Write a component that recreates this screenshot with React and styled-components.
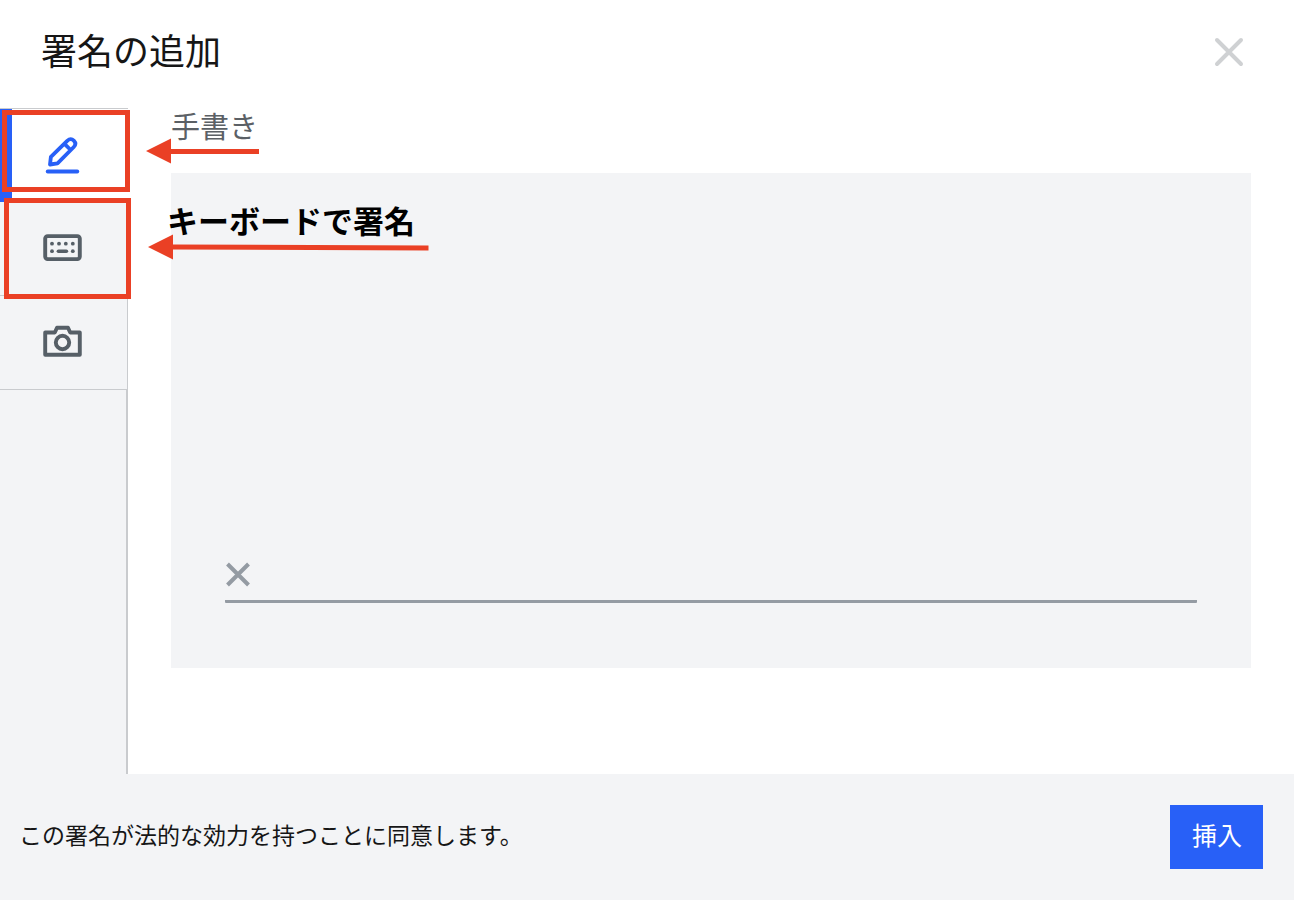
import React from "react";
import styled, { createGlobalStyle } from "styled-components";

const GlobalStyle = createGlobalStyle`
  *, *::before, *::after { box-sizing: border-box; }
  body {
    margin: 0;
    background: #ffffff;
    font-family: "Noto Sans CJK JP", sans-serif;
    color: #161616;
  }
  button { font-family: inherit; cursor: pointer; }
`;

const Dialog = styled.section`
  position: relative;
  display: flex;
  flex-direction: column;
  min-height: 100vh;
`;

const Header = styled.header`
  display: flex;
  align-items: flex-start;
  justify-content: space-between;
  height: 108px;
  padding: 24px 44px 0 41px;
`;

const Title = styled.h1`
  margin: 0;
  font-size: 36px;
  line-height: 50px;
  font-weight: 400;
`;

const CloseButton = styled.button`
  display: flex;
  margin-top: 7px;
  padding: 4px;
  border: 0;
  background: none;
`;

const Body = styled.div`
  display: flex;
  flex: 1;
`;

const Sidebar = styled.nav`
  display: flex;
  flex-direction: column;
  width: 128px;
  flex-shrink: 0;
  background: #f3f4f6;
`;

const SidebarFill = styled.div`
  flex: 1;
  border-right: 2px solid #c9cbce;
`;

const Tabs = styled.div`
  display: flex;
  flex-direction: column;
  border-top: 1px solid #c9cbce;
`;

const Tab = styled.button`
  display: flex;
  align-items: center;
  justify-content: center;
  height: 94px;
  padding: 0 ${(p) => (p.$active ? 14 : 1)}px 0 0;
  border: 0;
  border-left: ${(p) => (p.$active ? "12px solid #2860f7" : "0")};
  border-right: ${(p) => (p.$active ? "0" : "1px solid #c9cbce")};
  border-bottom: 1px solid #c9cbce;
  background: ${(p) => (p.$active ? "#ffffff" : "#f3f4f6")};
  color: ${(p) => (p.$active ? "#2860f7" : "#565f67")};

  & + & { margin-top: -1px; }
  &:last-child { margin-top: 0; }
`;

const Content = styled.main`
  flex: 1;
  padding: 0 43px 40px;
`;

const ModeTitle = styled.h2`
  margin: 0;
  height: 65px;
  font-size: 29px;
  line-height: 34px;
  font-weight: 400;
  color: #5b6065;
`;

const SignaturePad = styled.div`
  display: flex;
  flex-direction: column;
  justify-content: flex-end;
  aspect-ratio: 24 / 11;
  padding: 0 5% 65px;
  background: #f3f4f6;
`;

const SignatureLine = styled.div`
  display: flex;
  height: 41px;
  border-bottom: 3px solid #949ba3;
  border-radius: 1px;
`;

const Footer = styled.footer`
  display: flex;
  align-items: flex-start;
  justify-content: space-between;
  height: 126px;
  padding: 31px 31px 0 19px;
  background: #f3f4f6;
`;

const Consent = styled.p`
  margin: 0;
  font-size: 23px;
  line-height: 58px;
`;

const InsertButton = styled.button`
  height: 64px;
  padding: 0 21px 6px 22px;
  border: 0;
  background: #2860f7;
  color: #ffffff;
  font-size: 25px;
  line-height: 36px;
`;

const Highlight = styled.div`
  position: absolute;
  left: ${(p) => p.$left}px;
  top: ${(p) => p.$top}px;
  width: ${(p) => p.$width}px;
  height: ${(p) => p.$height}px;
  border: 5px solid #ea4025;
  pointer-events: none;
`;

const Arrows = styled.svg`
  position: absolute;
  left: 140px;
  top: 130px;
  pointer-events: none;
`;

const Note = styled.strong`
  position: absolute;
  left: 167px;
  top: 198px;
  font-size: 31px;
  line-height: 44px;
  font-weight: 700;
  color: #000000;
`;

const PenIcon = () => (
  <svg width="40" height="40" viewBox="43 136 40 40" fill="none" stroke="currentColor" strokeWidth="3.8" strokeLinecap="round" strokeLinejoin="round" aria-hidden="true">
    <path d="M50 164.5 50.9 156.8 67.2 140.8C69.5 138.7 72 138.8 73.8 140.6C75.7 142.6 75.8 145 73.8 147L57.5 163.3Z M64.5 143.8 70.7 150" />
    <path d="M47.7 171.5H77.3" />
  </svg>
);

const KeyboardIcon = () => (
  <svg width="40" height="40" viewBox="0 1 40 40" fill="none" aria-hidden="true">
    <rect x="2.2" y="8.1" width="34.6" height="23" rx="2.5" stroke="currentColor" strokeWidth="3.9" />
    <g fill="currentColor">
      <circle cx="9" cy="15.7" r="1.9" />
      <circle cx="16" cy="15.7" r="1.9" />
      <circle cx="22.8" cy="15.7" r="1.9" />
      <circle cx="29.8" cy="15.7" r="1.9" />
      <circle cx="9" cy="23.2" r="1.9" />
      <circle cx="29.8" cy="23.2" r="1.9" />
    </g>
    <path d="M15.4 23.2H23.4" stroke="currentColor" strokeWidth="3.6" strokeLinecap="round" />
  </svg>
);

const CameraIcon = () => (
  <svg width="40" height="40" viewBox="0 1 40 40" fill="none" stroke="currentColor" strokeWidth="3.9" strokeLinejoin="round" aria-hidden="true">
    <path d="M2.2 10.5H11.8L14 5.7H25L27.2 10.5H36.8V32.8H2.2Z" />
    <circle cx="19.5" cy="20.5" r="6.7" />
  </svg>
);

export default function App() {
  return (
    <>
      <GlobalStyle />
      <Dialog role="dialog" aria-labelledby="dialog-title">
        <Header>
          <Title id="dialog-title">署名の追加</Title>
          <CloseButton type="button" aria-label="閉じる">
            <svg width="34" height="34" viewBox="0 0 34 34" stroke="#cfd1d3" strokeWidth="4" strokeLinecap="round" aria-hidden="true">
              <path d="M5 5 29 29M29 5 5 29" />
            </svg>
          </CloseButton>
        </Header>
        <Body>
          <Sidebar>
            <Tabs>
              <Tab type="button" $active aria-label="手書き"><PenIcon /></Tab>
              <Tab type="button" aria-label="キーボード"><KeyboardIcon /></Tab>
              <Tab type="button" aria-label="画像"><CameraIcon /></Tab>
            </Tabs>
            <SidebarFill />
          </Sidebar>
          <Content>
            <ModeTitle>手書き</ModeTitle>
            <SignaturePad>
              <SignatureLine>
                <svg width="26" height="26" viewBox="0 0 26 26" stroke="#949ba3" strokeWidth="4" aria-hidden="true">
                  <path d="M2.5 2 23.5 23M23.5 2 2.5 23" />
                </svg>
              </SignatureLine>
            </SignaturePad>
          </Content>
        </Body>
        <Footer>
          <Consent>この署名が法的な効力を持つことに同意します。</Consent>
          <InsertButton type="button">挿入</InsertButton>
        </Footer>
        <Highlight $left={2} $top={110} $width={128} $height={82} />
        <Highlight $left={4} $top={198} $width={127} $height={101} />
        <Note>キーボードで署名</Note>
        <Arrows width="300" height="140" viewBox="140 130 300 140" fill="#ea4025" aria-hidden="true">
          <path d="M146 151 171 138.5V149H259V154H171V163.5Z" />
          <path d="M148 247 173 234.5V244.5L428.5 245.5V250.5L173 249.5V259.5Z" />
        </Arrows>
      </Dialog>
    </>
  );
}
